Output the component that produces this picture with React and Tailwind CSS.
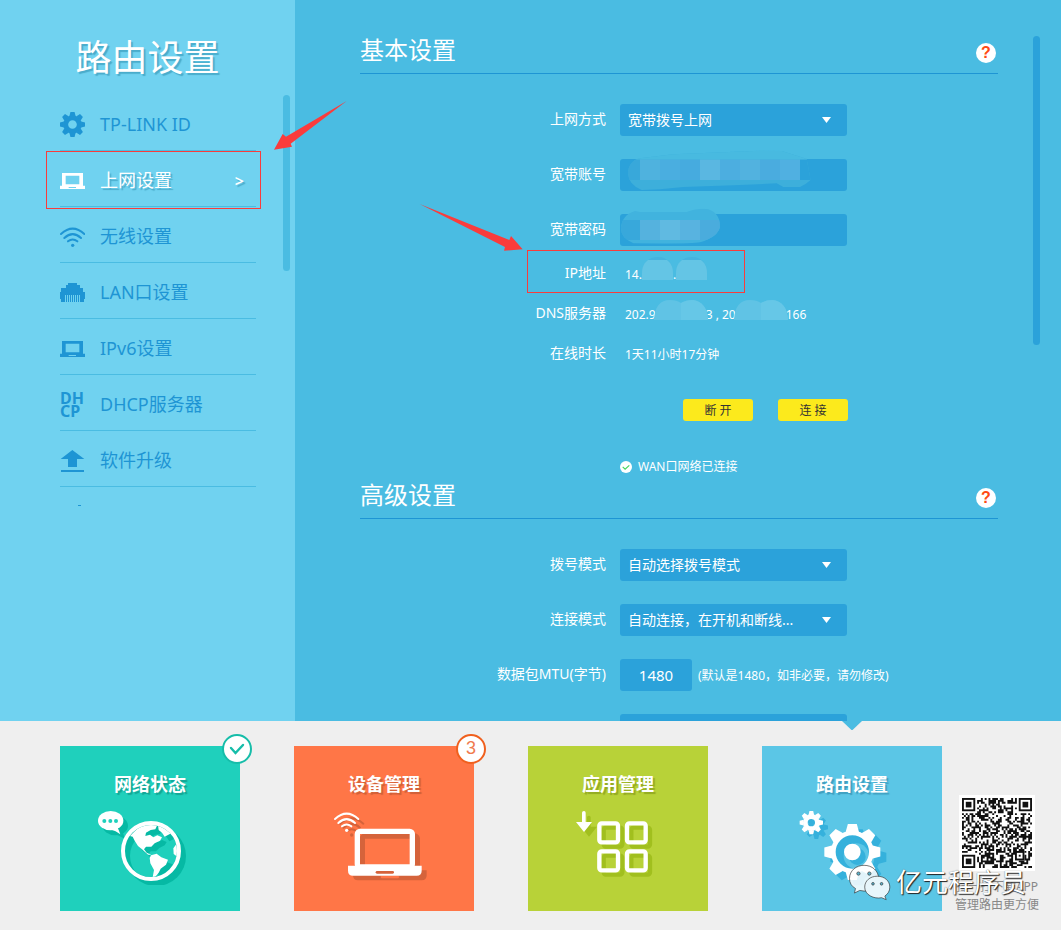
import clsx from 'clsx';

const TEETH = [0, 45, 90, 135, 180, 225, 270, 315];

function Gear({ cx, cy, outer, body, hole, color }) {
  const ring = (body + hole) / 2;
  const tip = outer * 0.16;
  const base = outer * 0.24;
  return (
    <g fill={color}>
      <circle cx={cx} cy={cy} r={ring} fill="none" stroke={color} strokeWidth={body - hole} />
      {TEETH.map((deg) => (
        <path
          key={deg}
          transform={`rotate(${deg} ${cx} ${cy})`}
          d={`M${cx - base} ${cy - body * 0.92}L${cx - tip} ${cy - outer}H${cx + tip}L${cx + base} ${cy - body * 0.92}z`}
        />
      ))}
    </g>
  );
}

function Wifi({ color }) {
  return (
    <g fill="none" stroke={color} strokeWidth="6" strokeLinecap="round">
      <path d="M3 21Q38 -11 73 21M13 33Q38 10 63 33M24 43Q38 32 52 43" />
      <circle cx="38" cy="55" r="5" fill={color} stroke="none" />
    </g>
  );
}

function GearIcon() {
  return (
    <svg viewBox="0 0 75 75" className="size-[25px]">
      <Gear cx={37.5} cy={37.5} outer={38} body={28} hole={13} color="currentColor" />
    </svg>
  );
}

function LaptopIcon() {
  return (
    <svg viewBox="0 0 75 75" className="size-[25px]" fill="currentColor">
      <path fillRule="evenodd" d="M6 15h63v38h6v10H0V53h6zM17 23v26h41V23zM26 57v3h22v-3z" />
    </svg>
  );
}

function WifiIcon() {
  return (
    <svg viewBox="0 -9 75 75" className="size-[25px]">
      <Wifi color="currentColor" />
    </svg>
  );
}

function LanIcon() {
  return (
    <svg viewBox="0 0 75 75" className="size-[25px]" fill="currentColor">
      <path d="M24 9h27v6h9v9h9v12h6v21h-3v9H60V45H15v21H3v-9H0V36h3V24h15v-9h6z" />
      <path d="M18 45h3v21h-3zM24 45h3v21h-3zM30 45h3v21h-3zM36 45h3v21h-3zM42 45h3v21h-3zM48 45h3v21h-3zM54 45h3v21h-3z" />
    </svg>
  );
}

function UpgradeIcon() {
  return (
    <svg viewBox="0 0 75 75" className="size-[25px]" fill="currentColor">
      <path d="M37 6L73 33H51V57H24V33H2zM3 66h69v6H3z" />
    </svg>
  );
}

function DhcpIcon() {
  return <span className="block w-[25px] text-base leading-[13px] font-bold">DH<br />CP</span>;
}

// next entry of the list, only its top edge shows
function TimerIcon() {
  return (
    <svg viewBox="0 0 75 75" className="size-[25px]" fill="currentColor">
      <path d="M54 3h9v3h-9z" />
    </svg>
  );
}

const NAV = [
  { label: 'TP-LINK ID', icon: GearIcon },
  { label: '上网设置', icon: LaptopIcon, active: true },
  { label: '无线设置', icon: WifiIcon },
  { label: 'LAN口设置', icon: LanIcon },
  { label: 'IPv6设置', icon: LaptopIcon },
  { label: 'DHCP服务器', icon: DhcpIcon },
  { label: '软件升级', icon: UpgradeIcon },
];

function Sidebar() {
  return (
    <aside className="flex w-[295px] shrink-0 flex-col bg-[#70d2f0]">
      <h1 className="pt-[35px] text-center text-4xl leading-[46px] text-white [text-shadow:2px_2px_1px_#4aaccb]">路由设置</h1>
      <div className="mt-3.5 flex justify-between pr-[5px] pl-[60px]">
        <nav className="w-[196px]">
          <ul>
            {NAV.map(({ label, icon: Icon, active }) => (
              <li key={label} className="relative h-14 border-b border-[#4abce2]">
                <a
                  href="#"
                  className={clsx(
                    'flex h-full items-center gap-[15px] pt-1 text-lg',
                    active ? 'text-white [text-shadow:2px_2px_1px_#4aaccb]' : 'text-[#1e95d4]'
                  )}
                >
                  <Icon />
                  <span className="flex-1 pb-0.5">{label}</span>
                  {active && <span className="pr-3 text-base font-semibold">&gt;</span>}
                </a>
                {active && <div className="pointer-events-none absolute top-0 -right-[5px] -bottom-[3px] -left-[14px] border border-[#fa3c3c]" />}
              </li>
            ))}
          </ul>
          <div className="h-5 overflow-hidden pt-[17px] text-[#1e95d4]">
            <TimerIcon />
          </div>
        </nav>
        <div className="h-44 w-[7px] rounded-full bg-[#4abce2]" />
      </div>
    </aside>
  );
}

function SectionHeader({ title }) {
  return (
    <header className="flex h-11 items-end justify-between border-b border-[#1e95d4] pr-0.5">
      <h2 className="text-2xl leading-[46px]">{title}</h2>
      <button type="button" aria-label={`${title}帮助`} className="mb-2.5 size-5 rounded-full bg-white font-['Liberation_Sans',sans-serif] text-base leading-5 font-bold text-[#ff4a12]">?</button>
    </header>
  );
}

function Row({ label, htmlFor, className, children }) {
  return (
    <div className={clsx('flex items-center', className)}>
      <label htmlFor={htmlFor} className="w-[246px] shrink-0 pb-0.5 text-right text-sm">{label}</label>
      {children}
    </div>
  );
}

function Select({ id, value }) {
  return (
    <div className="relative ml-3.5">
      <select id={id} className="h-8 w-[227px] appearance-none rounded-[3px] bg-[#2ba2da] pr-8 pl-2 text-sm text-white">
        <option>{value}</option>
      </select>
      <svg viewBox="0 0 9 6" className="pointer-events-none absolute top-[13px] right-4 h-1.5 w-[9px]" fill="#fff">
        <path d="M0 0h9L4.5 6z" />
      </svg>
    </div>
  );
}

const ACCOUNT_TILES = ['#4fb2de', '#4aaee0', '#46abdf', '#5ab7e1', '#4caee0', '#52b2df', '#4aacdf', '#50b0e1'];
const PASSWORD_TILES = ['#55b2de', '#60bae1', '#58b3e0', '#4aacdd'];

function AccountMask() {
  return (
    <svg viewBox="60 180 681 123" className="pointer-events-none absolute -top-[9px] left-0 h-[41px] w-[227px]">
      <clipPath id="accountBlob">
        <path d="M84 250Q86 212 120 205L220 193L480 182L545 183L600 200L620 207L632 270Q615 285 600 291H550L530 280L400 286L250 291L180 298L125 300Q86 285 84 250z" />
      </clipPath>
      <g clipPath="url(#accountBlob)">
        <rect x="60" y="180" width="600" height="123" fill="#3dafdb" />
        <rect x="60" y="180" width="600" height="29" fill="#48bae0" />
        <rect x="60" y="209" width="60" height="61" fill="#38a8da" />
        <rect x="600" y="209" width="40" height="61" fill="#2ba2da" />
        {ACCOUNT_TILES.map((c, i) => (
          <rect key={i} x={120 + i * 60} y="209" width="60" height="61" fill={c} />
        ))}
      </g>
    </svg>
  );
}

function PasswordMask() {
  return (
    <svg viewBox="60 354 681 114" className="pointer-events-none absolute -top-1.5 left-0 h-[38px] w-[227px]">
      <clipPath id="passwordBlob">
        <path d="M63 415Q65 375 105 363L120 366H260Q300 352 325 358Q360 370 360 410Q355 440 300 457Q270 463 100 460Q63 445 63 415z" />
      </clipPath>
      <g clipPath="url(#passwordBlob)">
        <rect x="60" y="354" width="300" height="114" fill="#41b3de" />
        <rect x="60" y="390" width="60" height="60" fill="#38a8db" />
        {PASSWORD_TILES.map((c, i) => (
          <rect key={i} x={120 + i * 60} y="390" width="60" height="60" fill={c} />
        ))}
      </g>
    </svg>
  );
}

function SmallMask() {
  return (
    <svg viewBox="0 0 31 23" className="-mt-3 inline-block h-[23px] w-[31px] align-[-1px]">
      <path d="M0 23V16C0 6 7 0 16 0S31 6 31 16V23z" fill="#46b3de" />
      <path d="M0 23V16C0 10 2 6 6 3H25C29 6 31 10 31 16V23z" fill="#64c5e5" />
    </svg>
  );
}

function WideMask() {
  return (
    <svg viewBox="0 0 54 20" className="relative -mx-0.5 -mt-3 inline-block h-5 w-[54px] align-[-1px]" fill="#60c3e5">
      <path d="M0 20Q1 0 16 0Q23 0 27 3Q32 0 39 0Q53 2 54 20z" />
      <path d="M27 3Q32 0 39 0Q53 2 54 20H27z" fill="#66c7e7" />
    </svg>
  );
}

const FIELD = 'h-8 rounded-[3px] bg-[#2ba2da] text-white outline-none';

function BasicSettings() {
  return (
    <section>
      <SectionHeader title="基本设置" />
      <div className="flex flex-col gap-[23px] pt-[30px]">
        <Row label="上网方式" htmlFor="mode"><Select id="mode" value="宽带拨号上网" /></Row>
        <Row label="宽带账号" htmlFor="account">
          <div className="relative ml-3.5">
            <input id="account" type="text" className={clsx(FIELD, 'block w-[227px] px-2 text-sm')} />
            <AccountMask />
          </div>
        </Row>
        <Row label="宽带密码" htmlFor="password">
          <div className="relative ml-3.5">
            <input id="password" type="password" className={clsx(FIELD, 'block w-[227px] px-2 text-sm')} />
            <PasswordMask />
          </div>
        </Row>
      </div>
      <div className="pt-2">
        <Row label="IP地址" className="relative h-10">
          <span className="pt-0.5 pl-[19px] text-xs">14.<SmallMask />.<SmallMask /></span>
          <div className="pointer-events-none absolute -top-1 left-[167px] h-[43px] w-[218px] border border-[#fa3c3c]" />
        </Row>
        <Row label="DNS服务器" className="h-10">
          <span className="pt-0.5 pl-[19px] text-xs">202.9<WideMask />3 , 20<WideMask />166</span>
        </Row>
        <Row label="在线时长" className="h-10">
          <span className="pt-0.5 pl-[19px] text-xs">1天11小时17分钟</span>
        </Row>
      </div>
      <div className="mt-[25px] flex gap-[25px] pl-[323px]">
        <button type="button" className="h-[22px] w-[70px] rounded-[3px] bg-[#fcea1c] pt-0.5 text-xs text-[#333]">断 开</button>
        <button type="button" className="h-[22px] w-[70px] rounded-[3px] bg-[#fcea1c] pt-0.5 text-xs text-[#333]">连 接</button>
      </div>
      <p className="mt-[38px] flex h-4 items-center gap-1.5 pl-[260px] text-xs">
        <svg viewBox="0 0 12 12" className="size-3" fill="none">
          <circle cx="6" cy="6" r="6" fill="#fff" />
          <path d="M2.7 5.8l2.4 2.4 4.2-3.9" stroke="#3fd65c" strokeWidth="1.1" />
        </svg>
        WAN口网络已连接
      </p>
    </section>
  );
}

function AdvancedSettings() {
  return (
    <section>
      <SectionHeader title="高级设置" />
      <div className="flex flex-col gap-[23px] pt-[30px]">
        <Row label="拨号模式" htmlFor="dial"><Select id="dial" value="自动选择拨号模式" /></Row>
        <Row label="连接模式" htmlFor="connect"><Select id="connect" value="自动连接，在开机和断线..." /></Row>
        <Row label="数据包MTU(字节)" htmlFor="mtu">
          <input id="mtu" type="text" defaultValue="1480" className={clsx(FIELD, 'ml-3.5 w-[72px] text-center text-[15px]')} />
          <span className="ml-1.5 pt-0.5 text-xs">(默认是1480，如非必要，请勿修改)</span>
        </Row>
        <Row htmlFor="service">
          <input id="service" type="text" className={clsx(FIELD, 'ml-3.5 w-[227px] px-2 text-sm')} />
        </Row>
      </div>
    </section>
  );
}

const LAND = 'M270 348L296 322L326 311L352 315L346 328L332 330L318 338L316 348L330 344L340 352L352 346L366 352L360 362L344 370L334 380L318 380L312 388L320 398L334 404L324 404L306 388L294 378L284 362L278 350zM333 406L350 401L364 412L384 419L378 434L362 446L356 458L346 470L338 472L342 450L331 430L329 414zM354 316L378 320L398 338L388 343L374 350L366 338L356 330zM412 368L400 385L401 402L416 413L420 390z';

function StatusArt() {
  return (
    <svg viewBox="60 258 540 300" className="h-[100px] w-[180px]">
      <clipPath id="globeShadow"><path d="M60 258h540v237H60z" /></clipPath>
      <clipPath id="globeInner"><circle cx="333" cy="393" r="78" /></clipPath>
      <g fill="#06b9a4">
        <ellipse cx="226" cy="317" rx="38" ry="29" />
        <path d="M222 340L254 356L248 334z" />
      </g>
      <circle cx="348" cy="408" r="90" fill="#06b9a4" clipPath="url(#globeShadow)" />
      <circle cx="333" cy="393" r="84" fill="#06b9a4" />
      <g clipPath="url(#globeInner)">
        <circle cx="348" cy="408" r="78" fill="#1fd0bc" />
        <path d={LAND} transform="translate(14 14)" fill="#06b9a4" />
        <path d={LAND} fill="#fff" />
      </g>
      <circle cx="333" cy="393" r="84" fill="none" stroke="#fff" strokeWidth="12" />
      <ellipse cx="212" cy="302" rx="38" ry="29" fill="#fff" />
      <path d="M210 328Q228 332 241 343L232 320z" fill="#fff" />
      <g fill="#1fd0bc">
        <circle cx="193" cy="303" r="6" />
        <circle cx="211" cy="303" r="6" />
        <circle cx="228" cy="303" r="6" />
      </g>
    </svg>
  );
}

function Laptop({ color, slot }) {
  return (
    <g>
      <rect x="232" y="334" width="165" height="107" rx="8" fill="none" stroke={color} strokeWidth="16" />
      <path d="M204 437H425V452Q425 467 410 467H219Q204 467 204 452z" fill={color} />
      <rect x="287" y="453" width="55" height="8" rx="4" fill={slot} />
    </g>
  );
}

function DeviceArt() {
  return (
    <svg viewBox="42 258 540 300" className="h-[100px] w-[180px]">
      <g transform="translate(177 290)"><Wifi color="#d5633b" /></g>
      <g transform="translate(15 14)"><Laptop color="#d5633b" slot="#ff7647" /></g>
      <g transform="translate(162 276)"><Wifi color="#fff" /></g>
      <Laptop color="#fff" slot="#d5633b" />
    </svg>
  );
}

function Squares({ color }) {
  return (
    <g fill="none" stroke={color} strokeWidth="13">
      <rect x="238" y="310" width="56" height="57" rx="7" />
      <rect x="321" y="310" width="56" height="57" rx="7" />
      <rect x="238" y="394" width="56" height="57" rx="7" />
      <rect x="321" y="394" width="56" height="57" rx="7" />
    </g>
  );
}

const DOWN = 'M186 278Q186 273 192 273Q197 273 197 278V306H216L192 336L168 306H186z';

function AppsArt() {
  return (
    <svg viewBox="24 258 540 300" className="h-[100px] w-[180px]">
      <path d={DOWN} transform="translate(15 14)" fill="#a1bf1e" />
      <g transform="translate(13 13)"><Squares color="#a1bf1e" /></g>
      <path d={DOWN} fill="#fff" />
      <Squares color="#fff" />
    </svg>
  );
}

function RouterArt() {
  return (
    <svg viewBox="36 288 540 300" className="h-[100px] w-[180px]">
      <Gear cx={199} cy={352} outer={35} body={25} hole={11} color="#35b1dc" />
      <circle cx="307" cy="426" r="58" fill="#35b1dc" />
      <Gear cx={325} cy={442} outer={84} body={64} hole={48} color="#35b1dc" />
      <circle cx="319" cy="438" r="38" fill="#5bc6e6" />
      <circle cx="322" cy="440" r="25" fill="#35b1dc" />
      <Gear cx={184} cy={338} outer={35} body={25} hole={11} color="#fff" />
      <Gear cx={307} cy={426} outer={84} body={64} hole={50} color="#fff" />
      <circle cx="307" cy="426" r="25" fill="#fff" />
    </svg>
  );
}

const CARDS = [
  { title: '网络状态', bg: 'bg-[#1fd0bc]', shadow: '[text-shadow:2px_2px_1px_#12a594]', art: StatusArt, badge: 'check' },
  { title: '设备管理', bg: 'bg-[#ff7647]', shadow: '[text-shadow:2px_2px_1px_#cf6038]', art: DeviceArt, badge: '3' },
  { title: '应用管理', bg: 'bg-[#b8d238]', shadow: '[text-shadow:2px_2px_1px_#93aa22]', art: AppsArt },
  { title: '路由设置', bg: 'bg-[#5bc6e6]', shadow: '[text-shadow:2px_2px_1px_#3f9fc0]', art: RouterArt, current: true },
];

function Badge({ kind }) {
  if (kind === 'check') {
    return (
      <span className="absolute -top-3 -right-3 flex size-[30px] items-center justify-center rounded-full border-2 border-[#16bda9] bg-white">
        <svg viewBox="0 0 16 12" className="h-3 w-4" fill="none" stroke="#16bda9" strokeWidth="2.4" strokeLinecap="round">
          <path d="M2 5l4.500 5L14 2" />
        </svg>
      </span>
    );
  }
  return (
    <span className="absolute -top-3 -right-3 size-[30px] rounded-full border-2 border-[#f0601e] bg-white text-center font-['Liberation_Sans',sans-serif] text-lg leading-6 text-[#f07a4e]">
      {kind}
    </span>
  );
}

const QR = 37;

function inFinder(x, y) {
  const near = (ox, oy) => x >= ox - 1 && x <= ox + 7 && y >= oy - 1 && y <= oy + 7;
  return near(0, 0) || near(QR - 7, 0) || near(0, QR - 7) || (x >= 28 && x <= 32 && y >= 28 && y <= 32);
}

function qrPath() {
  let d = '';
  let seed = 77;
  for (let y = 0; y < QR; y++) {
    for (let x = 0; x < QR; x++) {
      seed = (seed * 48271) % 2147483647;
      if (!inFinder(x, y) && seed > 1000000000) d += `M${x} ${y}h1v1h-1z`;
    }
  }
  return d;
}

function QrCode() {
  return (
    <svg viewBox={`0 0 ${QR} ${QR}`} className="size-[76px] bg-white p-[3px]" role="img">
      <path d={qrPath()} fill="#111" />
      {[[0, 0], [30, 0], [0, 30]].map(([x, y]) => (
        <g key={`${x}-${y}`} transform={`translate(${x} ${y})`}>
          <rect x="0.5" y="0.5" width="6" height="6" fill="none" stroke="#111" />
          <rect x="2" y="2" width="3" height="3" fill="#111" />
        </g>
      ))}
      <rect x="28.5" y="28.5" width="4" height="4" fill="none" stroke="#111" />
      <rect x="30" y="30" width="1" height="1" fill="#111" />
    </svg>
  );
}

function Watermark() {
  return (
    <div className="pointer-events-none absolute top-[141px] left-[847px] flex items-center gap-1">
      <svg viewBox="290 455 135 115" className="h-[38px] w-[45px]" stroke="#333" strokeWidth="2">
        <path d="M341 462C365 462 385 478 385 502C385 525 365 540 341 540L328 538L312 546L315 532C303 526 297 515 297 502C297 478 317 462 341 462z" fill="#fff" fillOpacity="0.85" />
        <path d="M381 495C403 495 419 509 419 528C419 540 413 549 404 555L408 566L394 560C372 565 343 552 343 528C343 509 359 495 381 495z" fill="#e8f6fb" />
        <g fill="#5bb4cf">
          <circle cx="324" cy="487" r="5" />
          <circle cx="357" cy="487" r="5" />
          <circle cx="368" cy="518" r="4" />
          <circle cx="394" cy="518" r="4" />
        </g>
      </svg>
      <span className="text-[26px] leading-10 text-white [text-shadow:1px_1px_1px_#222,0_0_1px_#555]">亿元程序员</span>
    </div>
  );
}

function BottomBar() {
  return (
    <footer className="relative flex h-[209px] shrink-0 bg-[#efefef] pt-[25px] pl-[60px]">
      <nav className="flex gap-[54px]">
        {CARDS.map(({ title, bg, shadow, art: Art, badge, current }) => (
          <a key={title} href="#" className={clsx('relative flex h-[165px] w-[180px] flex-col pt-[22px] text-white', bg)}>
            <span className={clsx('h-[38px] text-center text-lg leading-8 font-bold', shadow)}>{title}</span>
            <Art />
            {badge && <Badge kind={badge} />}
            {current && (
              <svg viewBox="0 0 20 9" className="absolute -top-[25px] left-20 h-[9px] w-5" fill="#4abce2">
                <path d="M0 0h20L10.500 9h-1z" />
              </svg>
            )}
          </a>
        ))}
      </nav>
      <div className="ml-[13px] flex flex-col items-center pt-[49px] text-xs leading-[18px] whitespace-nowrap text-[#888]">
        <QrCode />
        <p className="mt-[7px]">扫一扫下载APP</p>
        <p>管理路由更方便</p>
      </div>
      <Watermark />
    </footer>
  );
}

export default function App() {
  return (
    <div className="relative flex h-screen flex-col overflow-hidden font-['Noto_Sans','Noto_Sans_CJK_SC',sans-serif]">
      <div className="flex min-h-0 flex-1">
        <Sidebar />
        <main className="flex min-w-0 flex-1 overflow-hidden bg-[#4abce2] text-white">
          <div className="min-w-0 flex-1 pt-[30px] pl-[65px]">
            <BasicSettings />
            <AdvancedSettings />
          </div>
          <div className="mt-9 mr-[21px] ml-[35px] h-[309px] w-[7px] rounded-full bg-[#2ba2da]" />
        </main>
      </div>
      <BottomBar />

      <svg viewBox="819 240 222 150" className="pointer-events-none absolute top-[100px] left-[273px] h-[50px] w-[74px]" fill="#fa3c3c">
        <path d="M1040 243L858 350L848 342L822 389L876 380L872 371z" />
      </svg>
      <svg viewBox="207 549 315 147" className="pointer-events-none absolute top-[203px] left-[419px] h-[49px] w-[105px]" fill="#fa3c3c">
        <path d="M209 552L478 660L483 648L518 688L462 692L465 681z" />
      </svg>
    </div>
  );
}
